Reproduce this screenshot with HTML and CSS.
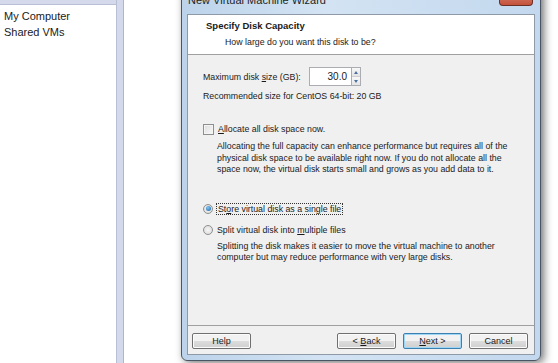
FILE: index.html
```html
<!DOCTYPE html>
<html lang="en">
<head>
    <meta charset="UTF-8">
    <title>New Virtual Machine Wizard</title>
    <link rel="stylesheet" href="styles.css">
</head>
<body>
    <div class="desktop">
        <aside class="library">
            <div class="library-top"></div>
            <ul class="library-list">
                <li>My Computer</li>
                <li>Shared VMs</li>
            </ul>
        </aside>
        <div class="splitter"></div>

        <div class="window-area">
            <div class="dialog">
                <div class="titlebar">
                    <span class="title">New Virtual Machine Wizard</span>
                    <span class="close-btn"></span>
                </div>

                <div class="client">
                    <div class="wizard-head">
                        <h1>Specify Disk Capacity</h1>
                        <p>How large do you want this disk to be?</p>
                    </div>

                    <div class="wizard-body">
                        <div class="size-row">
                            <label>Maximum disk <u>s</u>ize (GB):</label>
                            <div class="spin">
                                <span class="spin-value">30.0</span>
                                <span class="spin-arrows">
                                    <span class="arrow up"></span>
                                    <span class="arrow down"></span>
                                </span>
                            </div>
                        </div>
                        <p class="recommend">Recommended size for CentOS 64-bit: 20 GB</p>

                        <div class="option check-option">
                            <span class="checkbox"></span>
                            <span><u>A</u>llocate all disk space now.</span>
                        </div>
                        <p class="note">Allocating the full capacity can enhance performance but requires all of the physical disk space to be available right now. If you do not allocate all the space now, the virtual disk starts small and grows as you add data to it.</p>

                        <div class="option radio-option first">
                            <span class="radio checked"></span>
                            <span class="focus">St<u>o</u>re virtual disk as a single file</span>
                        </div>
                        <div class="option radio-option">
                            <span class="radio"></span>
                            <span>Split virtual disk into <u>m</u>ultiple files</span>
                        </div>
                        <p class="note split-note">Splitting the disk makes it easier to move the virtual machine to another computer but may reduce performance with very large disks.</p>
                    </div>

                    <div class="wizard-foot">
                        <button class="btn">Help</button>
                        <span class="spacer"></span>
                        <button class="btn">&lt; <u>B</u>ack</button>
                        <button class="btn default"><u>N</u>ext &gt;</button>
                        <button class="btn">Cancel</button>
                    </div>
                </div>
            </div>
        </div>
    </div>
</body>
</html>
```

FILE: styles.css
```css
* {
    margin: 0;
    padding: 0;
    box-sizing: border-box;
}

body {
    width: 558px;
    height: 363px;
    overflow: hidden;
    background: #fff;
    font-family: 'Liberation Sans', Arial, sans-serif;
    color: #000;
}

.desktop {
    display: flex;
    height: 363px;
}

/* left library pane */
.library {
    width: 117px;
    border-right: 1px solid #b9c0d6;
    display: flex;
    flex-direction: column;
}

.library-top {
    height: 5px;
    background: #d4d9ec;
    border-bottom: 1px solid #b9c0d6;
}

.library-list {
    list-style: none;
    padding: 3px 0 0 4px;
    font-size: 11px;
    color: #1a1a1a;
}

.library-list li {
    height: 16px;
    line-height: 16px;
}

.splitter {
    width: 7px;
    background: #d4d9ec;
    border-right: 1px solid #aeb5cc;
}

/* wizard window */
.window-area {
    flex: 1;
    padding-left: 57px;
}

.dialog {
    width: 360px;
    margin-top: -24px;
    height: 385px;
    border: 1px solid #4a5563;
    border-radius: 6px;
    background: linear-gradient(to right, #bcd3ea, #d3e3f3 40%, #c3d8ee);
    padding: 0 5px 5px 5px;
    box-shadow: 3px 2px 8px rgba(0,0,0,0.55);
    display: flex;
    flex-direction: column;
}

.titlebar {
    height: 37px;
    display: flex;
    align-items: flex-end;
    padding: 0 0 8px 1px;
}

.title {
    font-size: 11px;
    line-height: 11px;
    color: #1e1e1e;
}

.close-btn {
    margin-left: auto;
    margin-right: 2px;
    width: 34px;
    height: 19px;
    border: 1px solid #6b2f25;
    border-top: none;
    border-radius: 0 0 4px 4px;
    background: linear-gradient(#e0988a, #c4523b);
}

.client {
    flex: 1;
    border: 1px solid #8e9aa8;
    background: #f0f0f0;
    display: flex;
    flex-direction: column;
    font-size: 8.8px;
    color: #1a1a1a;
}

.wizard-head {
    height: 40px;
    background: #fff;
    border-bottom: 1px solid #a0a0a0;
    padding: 5px 0 0 18px;
}

.wizard-head h1 {
    font-size: 9.5px;
    font-weight: bold;
    line-height: 12px;
}

.wizard-head p {
    padding: 4px 0 0 19px;
    line-height: 12px;
}

.wizard-body {
    flex: 1;
    padding: 12px 0 0 15px;
    border-bottom: 1px solid #a0a0a0;
}

.size-row {
    display: flex;
    align-items: center;
    height: 19px;
}

.size-row label {
    width: 106px;
}

.spin {
    display: flex;
    height: 19px;
}

.spin-value {
    width: 42px;
    background: #fff;
    border: 1px solid #abadb3;
    border-right: none;
    text-align: right;
    padding-right: 4px;
    font-size: 10px;
    line-height: 17px;
}

.spin-arrows {
    width: 10px;
    display: flex;
    flex-direction: column;
    border: 1px solid #abadb3;
    background: #f4f4f4;
}

.arrow {
    flex: 1;
    display: flex;
    align-items: center;
    justify-content: center;
    background: linear-gradient(#f8f8f8, #e4e4e4);
}

.arrow.up {
    border-bottom: 1px solid #cfcfcf;
}

.arrow::after {
    content: '';
    border-left: 2px solid transparent;
    border-right: 2px solid transparent;
}

.arrow.up::after {
    border-bottom: 3px solid #4a6fa0;
}

.arrow.down::after {
    border-top: 3px solid #4a6fa0;
}

.recommend {
    margin-top: 4px;
    line-height: 12px;
}

.option {
    display: flex;
    align-items: center;
    gap: 4px;
    height: 14px;
}

.check-option {
    margin-top: 20px;
}

.checkbox {
    width: 11px;
    height: 11px;
    border: 1px solid #8e8f8f;
    background: linear-gradient(135deg, #dcdcdc, #fafafa);
    box-shadow: inset 0 0 0 1px #f4f4f4;
}

.note {
    padding-left: 14px;
    margin-top: 5px;
    width: 320px;
    line-height: 11.5px;
}

.radio-option.first {
    margin-top: 26px;
}

.radio-option + .radio-option {
    margin-top: 7px;
}

.split-note {
    margin-top: 4px;
}

.radio {
    width: 10px;
    height: 10px;
    border-radius: 50%;
    border: 1px solid #8e8f8f;
    background: radial-gradient(#f6f6f6, #d8d8d8);
    display: flex;
    align-items: center;
    justify-content: center;
}

.radio.checked::after {
    content: '';
    width: 5px;
    height: 5px;
    border-radius: 50%;
    background: radial-gradient(circle at 40% 35%, #7fc7f5, #1a5e9e);
}

.focus {
    outline: 1px dotted #333;
    padding: 0 1px;
}

.wizard-foot {
    height: 28px;
    display: flex;
    align-items: flex-start;
    padding: 7px 6px 0 4px;
    gap: 7px;
}

.spacer {
    flex: 1;
}

.btn {
    width: 59px;
    height: 16px;
    font-family: inherit;
    font-size: 9px;
    color: #1a1a1a;
    border: 1px solid #707070;
    border-radius: 2px;
    background: linear-gradient(#f2f2f2 50%, #dddddd 50%, #cfcfcf);
    box-shadow: inset 0 0 0 1px #fbfbfb;
}

.btn.default {
    border-color: #3c7fb1;
    box-shadow: inset 0 0 0 1px #9ed6f5;
}
```
